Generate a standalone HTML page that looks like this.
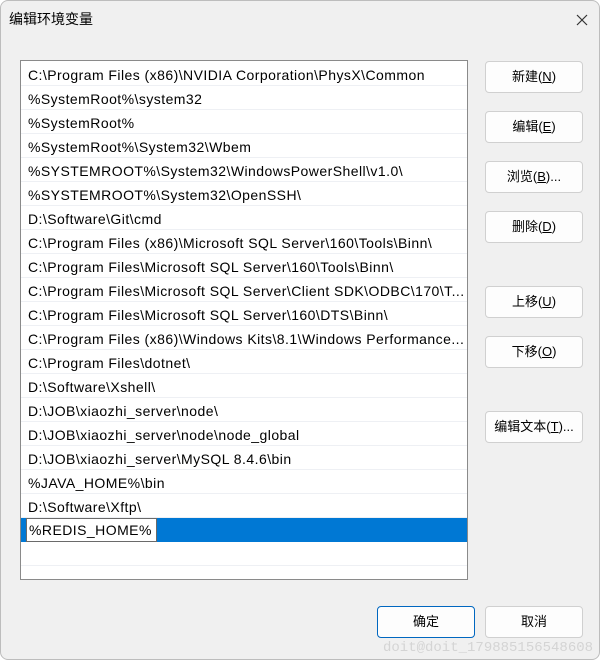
<!DOCTYPE html>
<html><head><meta charset="utf-8"><style>
body{margin:0;width:600px;height:660px;background:#fff;overflow:hidden;font-family:"Liberation Sans","Noto Sans CJK SC",sans-serif;}
.win{position:absolute;left:0;top:0;width:600px;height:660px;box-sizing:border-box;background:#f0f0f0;border:1px solid #bdbdbd;border-radius:8px;}
.abs{position:absolute;left:-1px;top:-1px;width:600px;height:660px;}
.title{position:absolute;left:9px;top:9px;font-size:14px;color:#000;}
.x{position:absolute;left:576px;top:14px;}
.list{position:absolute;left:20px;top:60px;width:446px;height:518px;background:#fff;border:1px solid #8a8a8a;}
.row{position:absolute;left:0;width:446px;height:23px;border-bottom:1px solid #eef0f4;font-size:14px;letter-spacing:0.45px;line-height:24px;padding-left:7px;box-sizing:border-box;white-space:nowrap;overflow:hidden;color:#000;}
.sel{background:#0078d4;border-bottom:none;}
.edit{position:absolute;left:5px;top:0;width:131px;height:24px;background:#fff;border:1px solid #6a6a6a;box-sizing:border-box;padding-left:2px;line-height:22px;}
.btn{position:absolute;left:485px;width:98px;height:32px;box-sizing:border-box;background:#fdfdfd;border:1px solid #d0d0d0;border-radius:4px;font-size:13px;text-align:center;line-height:30px;color:#000;}
.btn u{text-decoration:underline;}
.wm{position:absolute;left:383px;top:640px;font-family:"Liberation Mono",monospace;font-size:14px;color:#d4d4d4;}
</style></head><body>
<div class="win"><div class="abs">
<div class="title">编辑环境变量</div>
<svg class="x" width="12" height="12" viewBox="0 0 12 12"><path d="M1 1L11 11M11 1L1 11" stroke="#333" stroke-width="1.2"/></svg>
<div class="list">
<div class="row" style="top:2px">C:\Program Files (x86)\NVIDIA Corporation\PhysX\Common</div>
<div class="row" style="top:26px">%SystemRoot%\system32</div>
<div class="row" style="top:50px">%SystemRoot%</div>
<div class="row" style="top:74px">%SystemRoot%\System32\Wbem</div>
<div class="row" style="top:98px">%SYSTEMROOT%\System32\WindowsPowerShell\v1.0\</div>
<div class="row" style="top:122px">%SYSTEMROOT%\System32\OpenSSH\</div>
<div class="row" style="top:146px">D:\Software\Git\cmd</div>
<div class="row" style="top:170px">C:\Program Files (x86)\Microsoft SQL Server\160\Tools\Binn\</div>
<div class="row" style="top:194px">C:\Program Files\Microsoft SQL Server\160\Tools\Binn\</div>
<div class="row" style="top:218px">C:\Program Files\Microsoft SQL Server\Client SDK\ODBC\170\T...</div>
<div class="row" style="top:242px">C:\Program Files\Microsoft SQL Server\160\DTS\Binn\</div>
<div class="row" style="top:266px">C:\Program Files (x86)\Windows Kits\8.1\Windows Performance...</div>
<div class="row" style="top:290px">C:\Program Files\dotnet\</div>
<div class="row" style="top:314px">D:\Software\Xshell\</div>
<div class="row" style="top:338px">D:\JOB\xiaozhi_server\node\</div>
<div class="row" style="top:362px">D:\JOB\xiaozhi_server\node\node_global</div>
<div class="row" style="top:386px">D:\JOB\xiaozhi_server\MySQL 8.4.6\bin</div>
<div class="row" style="top:410px">%JAVA_HOME%\bin</div>
<div class="row" style="top:434px">D:\Software\Xftp\</div>
<div class="row sel" style="top:457px;height:24px"><div class="edit">%REDIS_HOME%</div></div>
<div class="row" style="top:482px"></div>
</div>
<div class="btn" style="top:61px">新建(<u>N</u>)</div>
<div class="btn" style="top:111px">编辑(<u>E</u>)</div>
<div class="btn" style="top:161px">浏览(<u>B</u>)...</div>
<div class="btn" style="top:211px">删除(<u>D</u>)</div>
<div class="btn" style="top:286px">上移(<u>U</u>)</div>
<div class="btn" style="top:336px">下移(<u>O</u>)</div>
<div class="btn" style="top:411px">编辑文本(<u>T</u>)...</div>
<div class="btn" style="top:606px;left:377px;border:1px solid #0067c0;">确定</div>
<div class="btn" style="top:606px">取消</div>
<div class="wm">doit@doit_179885156548608</div>
</div></div>
</body></html>
